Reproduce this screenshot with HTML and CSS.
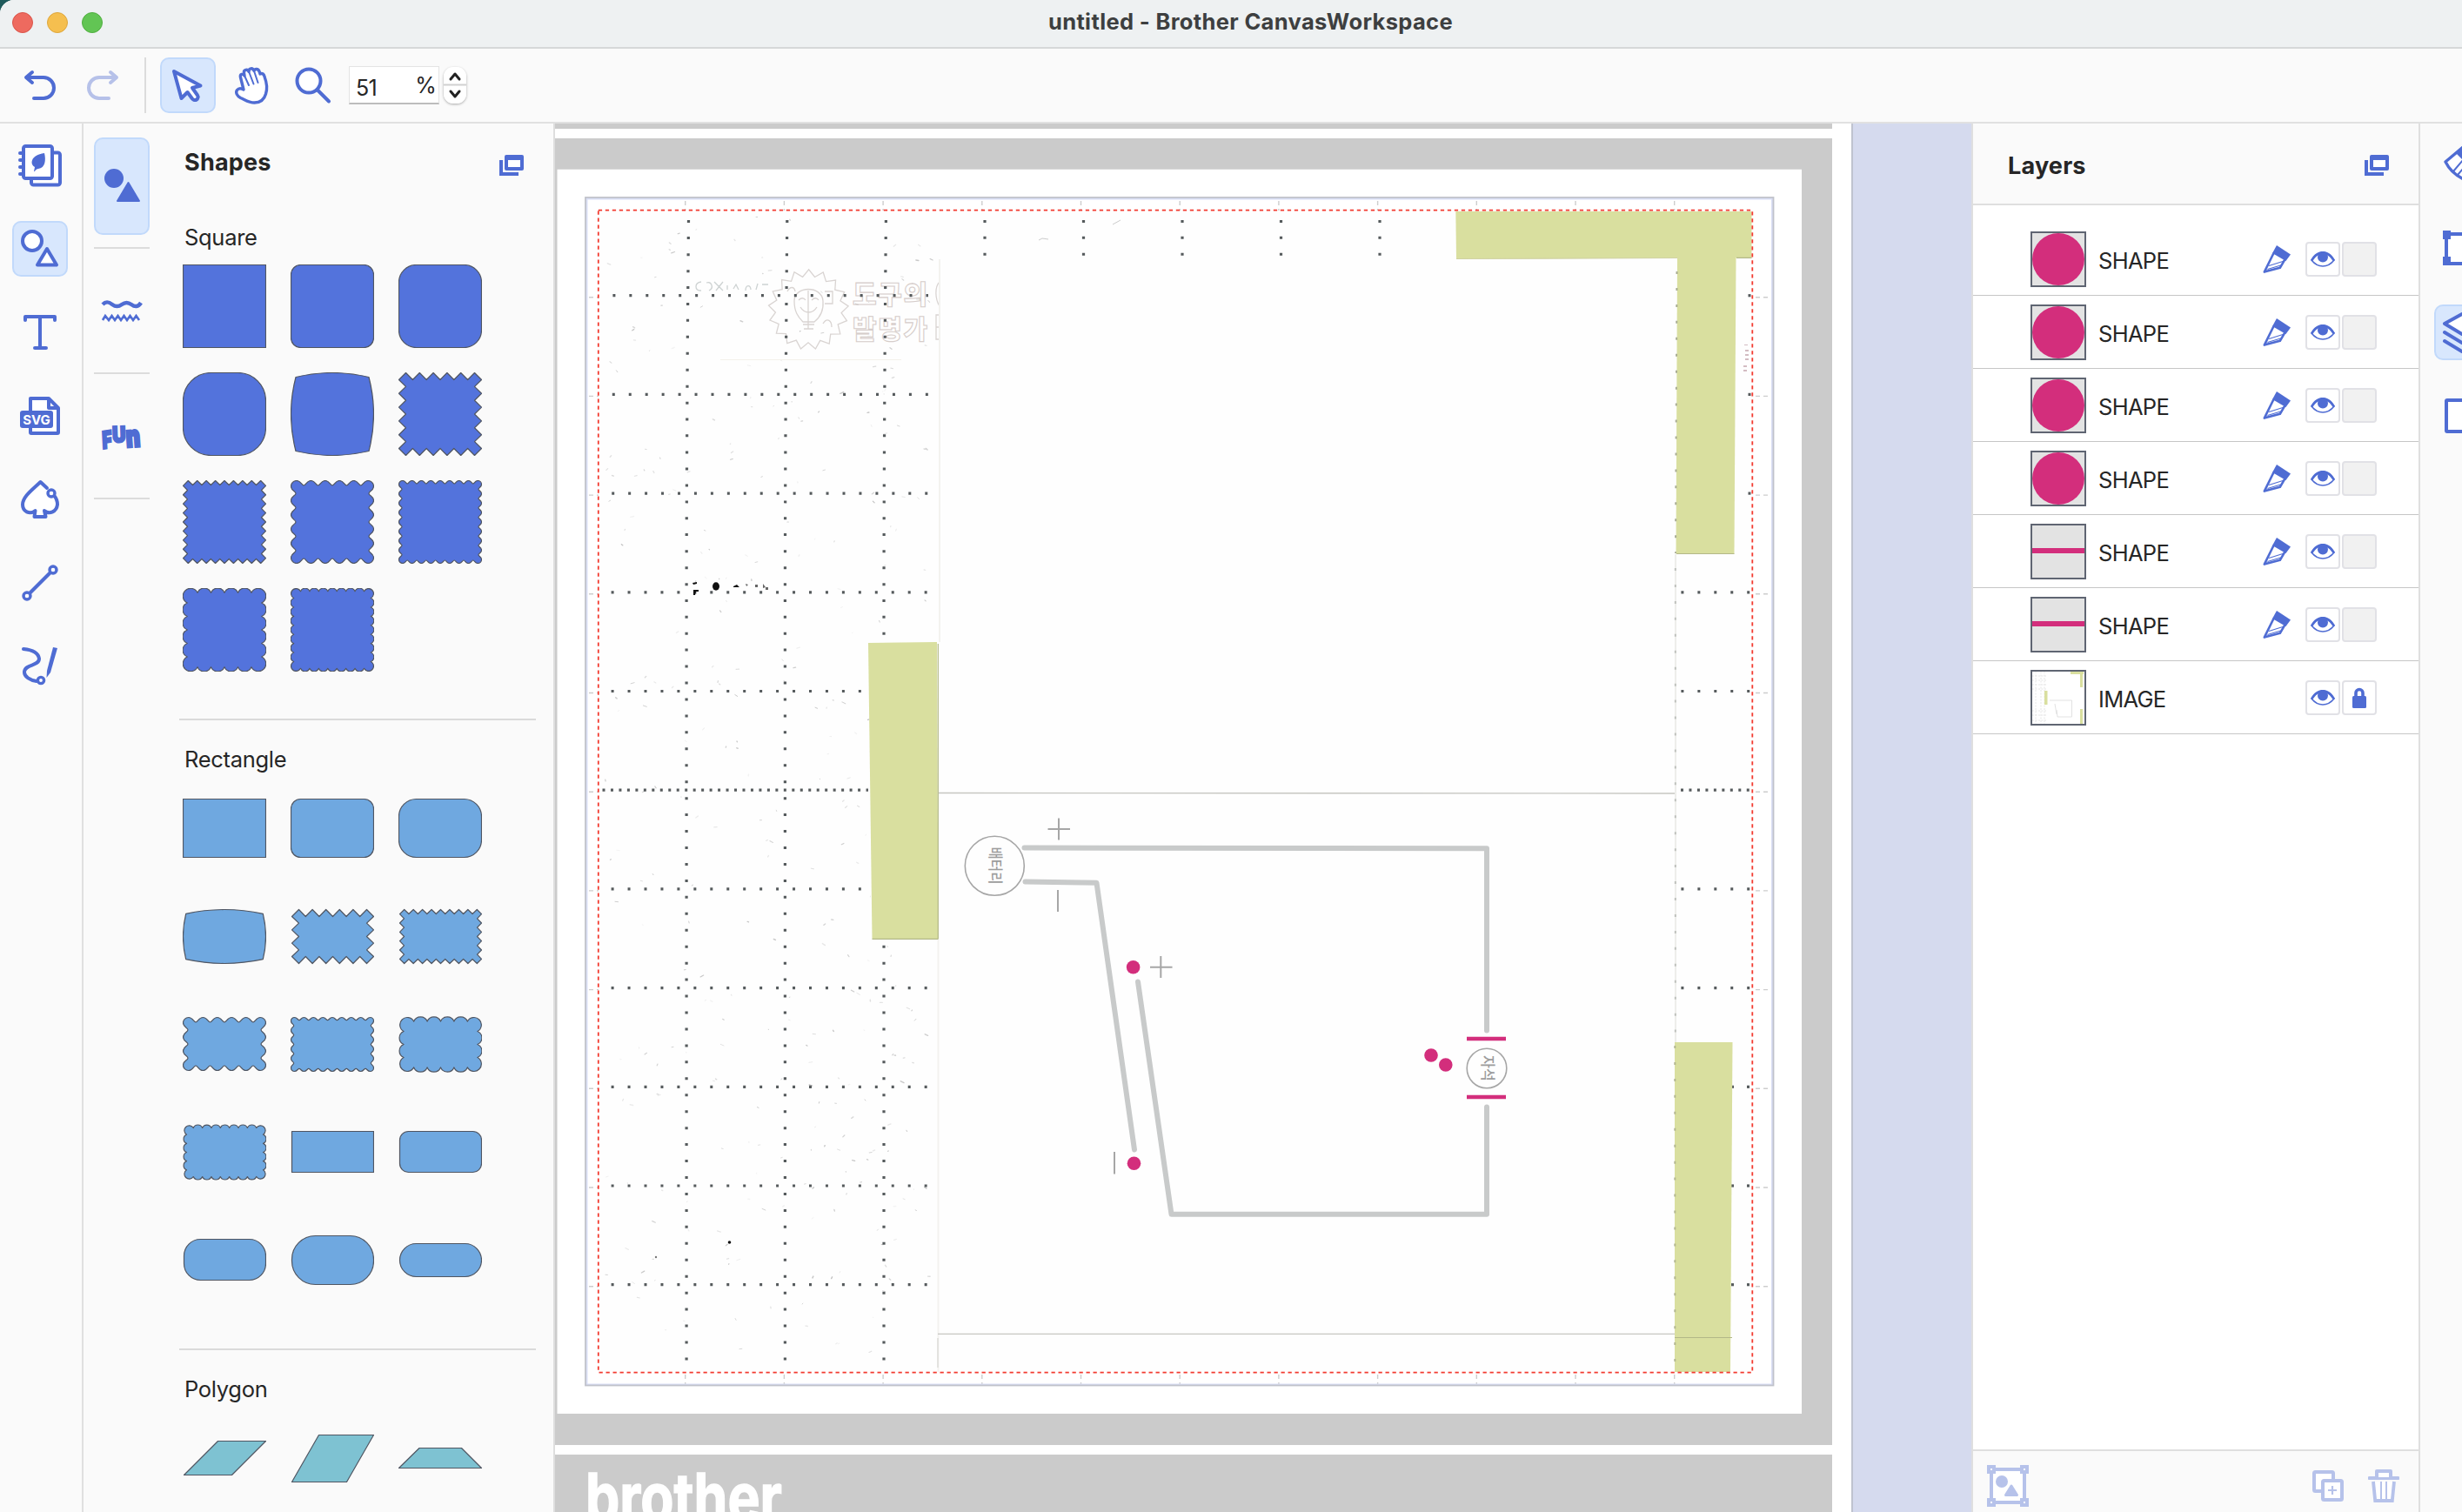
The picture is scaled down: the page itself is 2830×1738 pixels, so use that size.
FILE: index.html
```html
<!DOCTYPE html>
<html lang="en">
<head>
<meta charset="utf-8">
<title>untitled - Brother CanvasWorkspace</title>
<link rel="stylesheet" href="styles.css">
</head>
<body>
<svg class="defs" width="0" height="0" aria-hidden="true">
  <symbol id="i-panel" viewBox="0 0 28 24"><path d="M2 6v16h20" fill="none" stroke="currentColor" stroke-width="4"/><path d="M8 2h18v14H8z" fill="#fff" stroke="currentColor" stroke-width="4" stroke-linejoin="round"/><path d="M7 1h20v5H7z" fill="currentColor"/></symbol>
  <symbol id="i-knife" viewBox="0 0 32 32"><path d="M12.500 10 2 30.500l18-5 7-11.500z" fill="#fff"/><path d="M12.500 9 1.800 30.600l18-4.800 7-12" fill="none" stroke="currentColor" stroke-width="2.600" stroke-linejoin="round"/><path d="M7 23.500l16-5M5.500 27.500l15-4.500" stroke="currentColor" stroke-width="1.100"/><path d="M16 0 32 10.500l-5.500 7.500L11 9z" fill="currentColor"/></symbol>
  <symbol id="i-eye" viewBox="0 0 28 18"><path d="M1 10C5 3.500 9 2 14 2s9 1.500 13 8c-4 5-8 7-13 7S5 15 1 10z" fill="#fff" stroke="currentColor" stroke-width="1.600"/><path d="M0 10C4 2.500 9 0 14 0s10 2.500 14 10l-2.500 1C22.500 6 19 3 14 3S5.500 6 2.500 11z" fill="currentColor"/><circle cx="14" cy="6.500" r="6" fill="currentColor"/></symbol>
  <symbol id="i-lock" viewBox="0 0 16 24"><path d="M4 12V6.500a4 4 0 0 1 8 0V12" fill="none" stroke="currentColor" stroke-width="3.600"/><rect y="10" width="16" height="14" rx="1.500" fill="currentColor"/></symbol>
</svg>

<div class="window">
  <header class="titlebar">
    <div class="lights"><i class="light red"></i><i class="light amber"></i><i class="light green"></i></div>
    <h1 class="title">untitled - Brother CanvasWorkspace</h1>
  </header>

  <div class="toolbar">
    <svg class="ico undo" width="38" height="34" viewBox="0 0 38 34"><path d="M9 2 2 8l7 6M3 8h19a12 12 0 0 1 0 24H11" /></svg>
    <svg class="ico redo" width="38" height="34" viewBox="0 0 38 34"><path d="M29 2l7 6-7 6M35 8H16a12 12 0 0 0 0 24h11" /></svg>
    <span class="rule"></span>
    <button class="tool active"><svg class="ico" width="38" height="38" viewBox="0 0 38 38"><path class="w" d="M3 3l8.500 31 7-7 5.500 7.500a3.500 3.500 0 0 0 6-4l-6-8.500 9.500-2.500z"/></svg></button>
    <button class="tool hand"><svg class="ico" width="40" height="44" viewBox="0 0 40 44"><path class="w thin" d="M11 27 7.500 13c-1-4 3-5 4.500-2l-.5-3c-.7-4 4.200-5 5.500-1.500C17 2 21.500 1.500 23 5.500c1-3 4.800-2.500 6 .5l1 3c2.500-1.500 4.500.5 5 3 3 8 3.500 14 1.500 20-2 7-7 10-13 10-7 0-11-3.500-16-5.500-4-2-6-6-4-9 2-2.500 5-2 7.500-.5z"/><path class="thin2" d="M12.500 12l4.500 10M17.500 7.500l5 13M23.500 7l4 12"/></svg></button>
    <button class="tool lens"><svg class="ico" width="42" height="42" viewBox="0 0 42 42"><ellipse class="w" cx="16" cy="16" rx="13.500" ry="13.500"/><path d="M25.500 26 39 39.500"/></svg></button>
    <div class="zoombox"><span>51</span><span class="pct">%</span></div>
    <div class="stepper"><svg width="26" height="42" viewBox="0 0 26 42"><path d="M8 14l5-6 5 6M8 28l5 6 5-6"/></svg></div>
  </div>

  <main class="body">
    <nav class="rail">
      <span class="cell"><svg class="ico" width="50" height="50" viewBox="0 0 50 50"><path class="w" d="M15 40v5a2.500 2.500 0 0 0 2.500 2.500h28A2.500 2.500 0 0 0 48 45V13a2.500 2.500 0 0 0-2.500-2.500H40"/><rect class="w" x="6" y="3" width="33" height="37" rx="2.500"/><path d="M2 11h4M2 19h4M2 27h4M2 35h4"/><path class="f" d="M30 11c2 8 1 17-7 18-3 0-4 4-5 3l1-5c-6-3-5-14 11-16z"/></svg></span>
      <span class="cell active"><svg class="ico" width="46" height="46" viewBox="0 0 46 46"><circle class="w" cx="14" cy="14" r="11"/><path class="w" d="M31 23 42 41.500H20z"/></svg></span>
      <span class="cell"><svg class="ico" width="38" height="42" viewBox="0 0 38 42"><path d="M2 7V3h34v4M19 3v36M13 39h13"/></svg></span>
      <span class="cell"><svg class="ico" width="48" height="46" viewBox="0 0 48 46"><path class="w" d="M13 3h21l11 11v28a1 1 0 0 1-1 1H14a1 1 0 0 1-1-1zM34 3v11h11"/><rect class="f" x="1" y="17" width="38" height="20" rx="3"/><text class="svgtag" x="20" y="32.500">SVG</text></svg></span>
      <span class="cell"><svg class="ico" width="46" height="46" viewBox="0 0 46 46"><path class="w" d="M31 10 23.500 3C14 12 3 20 3 29c0 8 8 12 14.500 7L16.500 43h13l-1.500-7c6 5 14 1 15-7 0-4-1-7-3.500-10"/><circle class="w s3" cx="36" cy="16" r="4"/></svg></span>
      <span class="cell"><svg class="ico" width="42" height="42" viewBox="0 0 42 42"><path d="M9 33 33 9"/><circle class="w s3" cx="6" cy="36" r="4"/><circle class="w s3" cx="36" cy="6" r="4"/></svg></span>
      <span class="cell pen"><svg class="ico" width="42" height="44" viewBox="0 0 42 44"><path d="M2 3c11 1 17 5 18 11 0 9-16 6-17 15-.5 6 7 10 14 11"/><path class="f" d="M36 1 41 2 33 30l-4.500 6 .5-8z"/><circle class="w s3" cx="22" cy="39" r="3.600"/></svg></span>
    </nav>

    <nav class="kinds">
      <div class="kind"><span class="kbox active"><svg class="ico" width="44" height="44" viewBox="0 0 44 44"><circle class="f" cx="13" cy="13" r="11"/><path class="f j" d="M29.500 18 42 39H17z"/></svg></span></div>
      <div class="kind"><span class="kbox"><svg class="ico" width="46" height="28" viewBox="0 0 46 28"><path class="butt" d="M1 6c4-4 7-3 11 0s7 3 11 0 7-3 11 0 8 3 11-2"/><path class="zig" d="M1 24l3-5 4 5 3.500-5 3.500 5 3.500-5 3.500 5 3.500-5 3.500 5 3.500-5 3.500 5 3.500-5 3.500 5"/></svg></span></div>
      <div class="kind"><span class="kbox"><svg class="fun" width="50" height="34" viewBox="0 0 50 34"><g><text transform="translate(3 31) rotate(-9) skewX(-6) scale(.95 1.350)">F</text><text transform="translate(14.500 23.500) rotate(-2) scale(1.050 1.250)">U</text><text transform="translate(30.500 29) rotate(-4) scale(1.250 1.700)">n</text></g></svg></span></div>
    </nav>

    <section class="library">
      <div class="lib-head"><h2>Shapes</h2><svg class="pop" width="28" height="24"><use href="#i-panel"/></svg></div>
      <div class="group"><h3>Square</h3><div class="grid" data-set="square"></div></div>
      <div class="group"><h3>Rectangle</h3><div class="grid" data-set="rectangle"></div></div>
      <div class="group"><h3>Polygon</h3><div class="grid" data-set="polygon"></div></div>
    </section>

    <section class="stage">
      <svg class="mat" width="1492" height="1596" viewBox="638 142 1492 1596">
        <rect x="638" y="142" width="1491" height="1596" fill="#fff"/>
        <path fill="#cbcbcb" d="M638 142h1468v6H638zM638 159h1468v1502H638zM638 1672h1468v66H638z"/>
        <rect x="640.500" y="194.700" width="1430.500" height="1430.300" fill="#fff"/>
        <rect x="2128" y="142" width="2" height="1596" fill="#bfc3cf"/>
        <text class="brand" x="673" y="1749" textLength="226" lengthAdjust="spacingAndGlyphs">brother</text>
        <g id="ticks" stroke="#cdcdcd" stroke-width="1.400" stroke-dasharray="5 4"></g>
        <rect x="674.500" y="228.500" width="1362.500" height="1363" fill="none" stroke="#d9def5" stroke-width="2"/>
        <rect x="673" y="227" width="1365.500" height="1365.500" fill="none" stroke="#c0c2cb" stroke-width="1.800"/>
        <rect x="690" y="244" width="1322" height="1332" fill="#fefefe"/>
        <g id="specks" fill="none" stroke-linecap="round"></g>

        <g class="stamp">
          <path id="sun"/>
          <path d="M913 346c0-18 32-18 33 0 1 12-5 20-10 24h-13c-6-6-10-12-10-24zM929 334v44M918 345c3-3 6-3 8 0M933 345c3-3 6-3 8 0M920 353c5 8 14 8 19 0M923 373h13M924 378h11M905 335c3-6 8-6 9 0M948 335h9v14h-9M946 372c5-8 10-3 10 4" />
          <text x="980" y="349" textLength="86">도구의</text>
          <text x="980" y="389" textLength="86">발명가</text>
          <path d="M1080 324c-6 6-5 20 0 28M1080 362h-4v28h4M1080 376h-4"/>
          <path class="scrawl" d="M806 324c-8 1-8 10 0 10M812 325c6-2 9 6 3 9M821 324l10 10M831 324l-8 10M836 333v-5M843 332l3-5 3 6M857 334c0-7 6-7 6-1M869 333l2-7M876 327h7"/>
        </g>
        <path d="M828 413.500H1036" stroke="#f3f1ea"/>

        <g id="dots" fill="none" stroke="#555a5c" stroke-width="3.200"></g>
        <g fill="#111"><ellipse cx="823" cy="674" rx="4" ry="4.700"/><path d="M796 670l5-1v2l-4 1zM797 678h6v2h-3l-1 4h-2zM843 674l4-2 3 3h-7z"/><path fill="#666" d="M857 671l3 1-2 2zM868 672h3v3h-3zM877 671l3 4-3 1zM880 675h3v3h-3z"/><circle cx="838.500" cy="1428" r="1.800"/><circle cx="754" cy="1445" r="1.200" fill="#777"/></g>
        <g stroke="#ccc" fill="none"><path d="M1279 258l9-5M1194 276l4-2 7 1" /><path stroke="#f3f2ef" stroke-width="2" d="M1080 298V738M1078.500 1080V1577"/><path stroke="#dcdcd8" stroke-width="1.500" d="M1078 1572v-34"/><path stroke="#e8e8e4" stroke-width="1.500" d="M1926 637V1198"/></g>
        <path d="M1079 911.500 1925 912M1078 1533.300H1925" stroke="#c6c6c1" stroke-width="1.300"/>

        <g fill="#d9df9f">
          <path d="M998 739 1077 738 1078.500 1079.500 1002.500 1079z"/>
          <path d="M1673.300 243H2013.500V296.300L1674 297.500z"/>
          <path d="M1928 296H1995.500L1993.500 636.500H1926.500z"/>
          <path d="M1925 1198H1991.500L1989 1577H1925z"/>
        </g>
        <path d="M1002.500 1079.300H1078.500M1996 296.300H2013.500M1927 636.500H1993.500M1925 1537.500H1991M1078.300 740V1079" fill="none" stroke="#b3b888" stroke-width="1.200"/>
        <path d="M1674 297.500 1928 296.500" stroke="#d0d2a4" stroke-width="1.200"/>
        <g id="edge" fill="none"></g>
        <path d="M2007 396v1M2008 402v12M2006 420v10" stroke="#d3bcc2" stroke-width="4" stroke-dasharray="2 3"/>

        <g class="wire">
          <path d="M1177.500 974.500 1709 975.300V1184.500"/>
          <path d="M1178.500 1013.500 1260.500 1014.800 1304 1321.500"/>
          <path d="M1308 1128.500 1346.500 1395.700H1709V1272.500"/>
        </g>
        <g fill="none" stroke="#a6a6a6" stroke-width="1.600"><circle cx="1143.300" cy="995.300" r="34"/><circle cx="1709" cy="1228" r="22.800"/><path stroke-width="2" d="M1204.500 953h25.500M1217 940.500v25M1216 1023v25M1322 1111.700h25.500M1334.300 1099v25M1281 1324v25.500"/></g>
        <text class="label" transform="translate(1138 973.500) rotate(90)" textLength="43" lengthAdjust="spacingAndGlyphs">배터리</text>
        <text class="label" transform="translate(1703.500 1213) rotate(90)" textLength="30" lengthAdjust="spacingAndGlyphs">자석</text>
        <g fill="#d32e7c"><circle cx="1302.600" cy="1111.700" r="7.800"/><circle cx="1303.500" cy="1337.300" r="7.800"/><circle cx="1645" cy="1213" r="7.800"/><circle cx="1661.800" cy="1224" r="7.800"/><path d="M1686 1191.700h45v4.500h-45zM1686 1258.700h45v4.500h-45z"/></g>
        <rect x="687.800" y="241.700" width="1326.500" height="1336" fill="none" stroke="#f23b30" stroke-width="1.800" stroke-dasharray="4.300 3.700"/>
      </svg>
    </section>

    <aside class="layers">
      <div class="lay-head"><h2>Layers</h2><svg class="pop" width="28" height="24"><use href="#i-panel"/></svg></div>
      <ul class="list" id="layers"></ul>
      <div class="lay-foot">
        <svg width="48" height="48" viewBox="0 0 48 48"><path d="M5 5h38v38H5z" fill="#fff" stroke="currentColor" stroke-width="4"/><path d="M2 2h6v6H2zM40 2h6v6h-6zM2 40h6v6H2zM40 40h6v6h-6z" fill="#fff" stroke="currentColor" stroke-width="4"/><circle cx="17" cy="19" r="7" fill="currentColor"/><path d="M28 24l6.500 10.500h-13z" fill="currentColor" stroke="currentColor" stroke-width="3" stroke-linejoin="round"/></svg>
        <svg class="dup" width="36" height="36" viewBox="0 0 36 36"><rect x="2" y="2" width="22" height="22" rx="1.500" fill="#fff" stroke="currentColor" stroke-width="4"/><rect x="12" y="12" width="22" height="22" rx="1.500" fill="#fff" stroke="currentColor" stroke-width="4"/><path d="M18 23h10M23 18v10" stroke="currentColor" stroke-width="2.200"/></svg>
        <svg width="36" height="38" viewBox="0 0 36 38"><path d="M1.500 10h33" stroke="currentColor" stroke-width="4" stroke-linecap="round"/><path d="M10 9V2h16v7" fill="#fff" stroke="currentColor" stroke-width="4" stroke-linejoin="round"/><path d="M6 14l2.200 22h19.600L30 14" fill="#fff" stroke="currentColor" stroke-width="3.800"/><path d="M15 14v21M21 14v21" stroke="currentColor" stroke-width="2"/></svg>
      </div>
    </aside>

    <nav class="props">
      <span class="cell"><svg class="ico" width="44" height="44" viewBox="0 0 44 44"><path class="w s3" d="M22 2 3 18c5 10 12 17 26 22z"/><path class="f" d="M22 0 15 8l9 9z"/><path class="thin2" d="M12 29l12-14M17 33l12-14"/></svg></span>
      <span class="cell"><svg class="ico" width="44" height="42" viewBox="0 0 44 42"><path class="w" d="M4 4h36v34H4z"/><path class="f" d="M0 0h9v10H0zM0 30h9v10H0zM35 0h9v10h-9zM35 30h9v10h-9z"/></svg></span>
      <span class="cell active"><svg class="ico" width="44" height="48" viewBox="0 0 44 48"><path class="w" d="M22 3 2 14l20 12 20-12z"/><path d="M2 24l20 12 20-12M2 34l20 12 20-12"/></svg></span>
      <span class="cell"><svg class="ico" width="40" height="40" viewBox="0 0 40 40"><rect class="w" x="2" y="2" width="36" height="36" rx="1"/></svg></span>
    </nav>
  </main>
</div>
<script src="script.js"></script>
</body>
</html>
```

FILE: styles.css
```css
* { box-sizing: border-box; }
body { margin: 0; background: #1f5b5c; font-family: Inter, "Noto Sans CJK KR", sans-serif; color: #262626; }
h1, h2, h3, ul { margin: 0; padding: 0; font-weight: 400; list-style: none; }
button { padding: 0; background: none; border: 2px solid transparent; }
svg { display: block; flex: none; }
.defs { position: absolute; }

.window { width: 2830px; height: 1738px; overflow: hidden; background: #fafafa; border-top-left-radius: 16px; display: flex; flex-direction: column; }

.titlebar { height: 56px; flex: none; background: #eef1f2; border-bottom: 2px solid #d6d8d9; display: grid; grid-template-columns: 14px 1fr; align-items: center; padding-bottom: 2px; }
.lights { grid-column: 2; grid-row: 1; display: flex; gap: 16px; }
.light { width: 24px; height: 24px; border-radius: 50%; border: 1px solid; }
.red { background: #ee6a5f; border-color: #d9544a; }
.amber { background: #f5bf4f; border-color: #dda63c; }
.green { background: #62c554; border-color: #50ae40; }
.title { grid-column: 1 / 3; grid-row: 1; text-align: center; padding: 0 0 3px 45px; font-size: 25.500px; font-weight: 700; letter-spacing: .35px; color: #3d3f40; }

.toolbar { height: 86px; flex: none; border-bottom: 2px solid #e1e1e1; display: flex; align-items: center; padding-left: 28px; }
.ico { color: #4f6cd3; fill: none; stroke: #4f6cd3; stroke-width: 4; stroke-linecap: round; stroke-linejoin: round; overflow: visible; }
.ico .w { fill: #fff; }
.ico .f { fill: #4f6cd3; stroke: none; }
.ico .j { stroke: #4f6cd3; stroke-width: 2; }
.ico .s3 { stroke-width: 3.4; }
.ico .thin { stroke-width: 3.4; }
.ico .thin2 { stroke-width: 2; }
.ico .butt { stroke-linecap: butt; stroke-width: 4.5; }
.ico .zig { stroke-linecap: butt; stroke-width: 2.6; stroke-linejoin: miter; }
.redo { margin-left: 32px; stroke: #b6c1e9; }
.rule { width: 2px; height: 64px; background: #dcdcdc; margin: 0 16px 0 30px; }
.tool { width: 64px; height: 64px; border-radius: 10px; display: grid; place-items: center; }
.active { background: #d8e7fd; border: 2px solid #c1d9fb; border-radius: 10px; }
.hand { margin-left: 9px; }
.lens { margin-left: 7px; }
.zoombox { width: 104px; height: 44px; margin-left: 9px; background: #fff; border: 1px solid #e4e4e4; border-bottom: 2px solid #bcbcbc; display: flex; justify-content: space-between; padding: 4px 3px 0 7px; line-height: 40px; font-size: 25px; letter-spacing: -.8px; }
.pct { margin-top: -3px; font-size: 25px; }
.stepper { margin-left: 5px; width: 26px; height: 42px; border-radius: 11px; background: linear-gradient(#fff 19px, #d0d0d0 20px, #d0d0d0 21px, #fff 22px); box-shadow: 0 1px 3px #0005; }
.stepper path { fill: none; stroke: #222; stroke-width: 3; stroke-linecap: round; stroke-linejoin: round; }

.body { flex: 1; min-height: 0; display: flex; }
.rail { width: 96px; border-right: 2px solid #e0e0e0; padding: 16px 0 0 14px; display: flex; flex-direction: column; gap: 32px; }
.cell { width: 64px; height: 64px; flex: none; display: grid; place-items: center; }
.pen { padding-bottom: 3px; }
.svgtag { fill: #fff; stroke: none; font: 700 15px Inter, sans-serif; text-anchor: middle; }

.kinds { width: 88px; padding-left: 12px; }
.kind { width: 64px; height: 144px; padding: 16px 0 14px; border-bottom: 2px solid #dcdcdc; }
.kbox { height: 112px; display: grid; place-items: center; }
.fun { overflow: visible; fill: #4f6cd3; stroke: #4f6cd3; stroke-width: 1.8; }
.fun text { font: 900 20px Inter, sans-serif; }

.library { width: 454px; border-right: 2px solid #dedede; padding: 0 20px 0 22px; }
.lib-head { height: 86px; padding: 3px 14px 0 6px; display: flex; align-items: center; justify-content: space-between; }
h2 { font-size: 27px; font-weight: 700; letter-spacing: .2px; }
.pop { color: #4f6cd3; margin-top: 7px; }
.group { padding-bottom: 54px; border-bottom: 2px solid #dadada; }
.group h3 { height: 76px; padding: 29px 0 0 6px; line-height: 32px; font-size: 25.500px; letter-spacing: -.3px; }
.grid { display: grid; grid-template-columns: repeat(3, 96px); grid-auto-rows: 96px; gap: 28px; padding-left: 4px; }
.grid path { stroke: #505662; stroke-width: 1.2; stroke-linejoin: round; }

.stage { width: 1628px; flex: none; background: #d5daee; }
.brand { font: 700 77px Inter, sans-serif; fill: #fff; stroke: #fff; stroke-width: 1.5; }
.stamp { fill: none; stroke: #d9d4d2; stroke-width: 1.3; }
.stamp text { font: 900 30px "Noto Sans CJK KR", sans-serif; stroke: #d6cdca; stroke-width: 1.1; }
.scrawl { stroke: #cdd2d2; }
.wire { fill: none; stroke: #c8caca; stroke-width: 6; stroke-linecap: round; stroke-linejoin: round; }
.label { font: 500 17px "Noto Sans CJK KR", sans-serif; fill: #9c9c9c; }

.layers { width: 516px; flex: none; border: solid #dfdfdf; border-width: 0 2px; display: flex; flex-direction: column; }
.lay-head { height: 94px; flex: none; border-bottom: 2px solid #dfdfdf; padding: 4px 34px 0 40px; display: flex; align-items: center; justify-content: space-between; }
.lay-head .pop { margin-top: 0; }
.list { flex: 1; background: #fff; padding-top: 20px; }
.row { height: 84px; border-bottom: 1px solid #c6c6c6; display: flex; align-items: center; padding: 0 48px 0 66px; }
.thumb { width: 64px; height: 64px; border: 2px solid #5f6572; background: #e3e3e3; }
.name { flex: 1; padding: 4px 0 0 14px; font-size: 25.500px; letter-spacing: -.7px; }
.row .knife { color: #4f6cd3; margin-right: 17px; }
.box { width: 40px; height: 40px; border: 2px solid #e1e1e6; border-radius: 4px; display: grid; place-items: center; background: #fff; color: #4f6cd3; }
.box + .box { margin-left: 2px; }
.off { background: #f1f1f1; }
.lay-foot { height: 72px; flex: none; border-top: 2px solid #dfdfdf; display: flex; align-items: center; padding: 9px 22px 0 16px; color: #b6c2ea; }
.lay-foot .dup { margin: 0 28px 0 auto; }

.props { width: 48px; flex: none; padding: 16px 0 0 16px; display: flex; flex-direction: column; gap: 32px; overflow: hidden; }
```

FILE: script.js
```js
const f = n => +n.toFixed(2);

// Outline of a w x h frame whose sides carry nx / ny teeth.
// kind: "zig" straight teeth, "wave" soft bumps, "arc" round scallops.
function frame(kind, w, h, nx, ny, s, d) {
  const sides = [[w, nx], [h, ny], [w, nx], [h, ny]];
  const at = (side, t, v) => [[t, v], [w - v, t], [w - t, h - v], [v, h - t]][side].map(f).join(' ');
  let p = '';
  sides.forEach(([len, n], k) => {
    const pitch = (len - 2 * s) / (n - 1);
    for (let i = 0; i < n; i++) {
      const x = s + i * pitch;
      if (kind === 'arc') {
        if (i === 0) p += (k === 0 ? 'M' : `A${s} ${s} 0 1 1 `) + at(k, x + pitch / 2, d);
        else if (i < n - 1) { const r = f(pitch / 1.85); p += `A${r} ${r} 0 0 1 ` + at(k, x + pitch / 2, d); }
      } else if (i === 0) {
        p += k === 0 ? 'M' + at(k, x, 0) : (kind === 'zig' ? 'L' : `A${s} ${s} 0 0 1 `) + at(k, x, 0);
      } else {
        const m = x - pitch / 2, q = pitch * .3;
        p += kind === 'zig'
          ? 'L' + at(k, m, d) + 'L' + at(k, x, 0)
          : 'C' + at(k, x - pitch + q, 0) + ' ' + at(k, m - q / 2, d) + ' ' + at(k, m, d) + 'C' + at(k, m + q / 2, d) + ' ' + at(k, x - q, 0) + ' ' + at(k, x, 0);
      }
    }
  });
  if (kind === 'arc') p += `A${s} ${s} 0 1 1 ` + at(0, s + (w - 2 * s) / (nx - 1) / 2, d);
  else if (kind === 'wave') p += `A${s} ${s} 0 0 1 ` + at(0, s, 0);
  return p + 'Z';
}
const round = (w, h, r) => `M${r} 0H${w - r}A${r} ${r} 0 0 1 ${w} ${r}V${h - r}A${r} ${r} 0 0 1 ${w - r} ${h}H${r}A${r} ${r} 0 0 1 0 ${h - r}V${r}A${r} ${r} 0 0 1 ${r} 0Z`;
const barrel = (w, h, a, b) => `M${a} ${b}Q${w / 2} ${-b} ${w - a} ${b}Q${w + a} ${h / 2} ${w - a} ${h - b}Q${w / 2} ${h + b} ${a} ${h - b}Q${-a} ${h / 2} ${a} ${b}Z`;

const sets = {
  square: ['#5373dc', [
    [95, 95, round(95, 95, 0)], [95, 95, round(95, 95, 11)], [95, 95, round(95, 95, 20)],
    [95, 95, round(95, 95, 32)], [95, 95, barrel(95, 95, 5.5, 5)], [95, 95, frame('zig', 95, 95, 6, 6, 8, 8)],
    [95, 95, frame('zig', 95, 95, 9, 9, 5.8, 5)], [95, 95, frame('wave', 95, 95, 6, 6, 6.5, 5.5)], [95, 95, frame('wave', 95, 95, 9, 9, 4.3, 3.5)],
    [95, 95, frame('arc', 95, 95, 6, 6, 8.8, 4.8)], [95, 95, frame('arc', 95, 95, 9, 9, 5.8, 3.2)]]],
  rectangle: ['#6fa8e0', [
    [95, 67, round(95, 67, 0)], [95, 67, round(95, 67, 11)], [95, 67, round(95, 67, 20)],
    [95, 62, barrel(95, 62, 3.2, 4.8)], [94, 62, frame('zig', 94, 62, 6, 4, 8, 8)], [94, 62, frame('zig', 94, 62, 9, 6, 5.2, 5)],
    [95, 61, frame('wave', 95, 61, 6, 4, 6.3, 5.5)], [95, 62, frame('wave', 95, 62, 9, 6, 4, 3.2)], [94, 62, frame('arc', 94, 62, 6, 4, 8.5, 4.6)],
    [94, 62, frame('arc', 94, 62, 9, 6, 5.6, 3)], [94, 47, round(94, 47, 0)], [94, 47, round(94, 47, 10)],
    [94, 47, round(94, 47, 19)], [94, 56, round(94, 56, 27)], [94, 38, round(94, 38, 19)]]],
  polygon: ['#7ec2d2', [
    [94, 39, 'M39 0H94L55 39H0Z'], [94, 54, 'M31 0H94L63 54H0Z'], [95, 23, 'M23.500 0H72L95 23H0Z']]]
};
for (const [name, [fill, shapes]] of Object.entries(sets)) {
  document.querySelector(`[data-set=${name}]`).innerHTML = shapes.map(([w, h, d]) =>
    `<svg width="96" height="96" viewBox="0 0 96 96"><path fill="${fill}" transform="translate(${Math.floor((96 - w) / 2) + .5} ${Math.floor((96 - h) / 2) + .5})" d="${d}"/></svg>`).join('');
}

// Layer rows
const mini = '<svg width="60" height="60" viewBox="0 0 60 60"><path fill="#fff" d="M0 0h60v60H0z"/><path d="M4 0v60M10 0v60M14 0v60M0 5h17M0 10h17M0 15h17M0 20h17M0 45h17M0 50h17M0 56h17" stroke="#e6e6e6" stroke-dasharray="2 1.500"/><path fill="#d9df9f" d="M44 0h15v3h-1v15h-3V3H44zM14 22h3.500v16H14zM55 43h3v17h-3z"/><path d="M20 33h25.500v19H29l-1-8M26 37l2 12" fill="none" stroke="#e2e2e2"/></svg>';
const disc = '<svg width="60" height="60"><circle cx="30" cy="30" r="30" fill="#d32e7c"/></svg>';
const bar = '<svg width="60" height="60"><path d="M0 26h60v6H0z" fill="#d32e7c"/></svg>';
document.getElementById('layers').innerHTML = [disc, disc, disc, disc, bar, bar, mini].map((art, i) => {
  const locked = i === 6;
  return `<li class="row"><span class="thumb">${art}</span><span class="name">${locked ? 'IMAGE' : 'SHAPE'}</span>` +
    (locked ? '' : '<svg class="knife" width="32" height="32"><use href="#i-knife"/></svg>') +
    '<span class="box"><svg width="28" height="18"><use href="#i-eye"/></svg></span>' +
    (locked ? '<span class="box"><svg width="16" height="24"><use href="#i-lock"/></svg></span>' : '<span class="box off"></span>') + '</li>';
}).join('');

// Mat ticks
let ticks = '';
for (let i = 1; i < 12; i++) {
  const x = f(674 + i * 113.7), y = f(228 + i * 113.7);
  ticks += `<path d="M${x} 231V242M${x} 1580V1591M677 ${y}H688M2018 ${y}H2037"/>`;
}
document.getElementById('ticks').innerHTML = ticks;

// Dotted rulings of the scanned sheet
let dots = '', edge = '';
const P = 18.947, dash = `stroke-dasharray="3 ${f(P - 3)}"`;
[790.3, 903.6, 1017.2].forEach(x => {
  const a = f(x + 1.2), b = f(x - 1.2);
  dots += `<path ${dash} d="M${a} 252.900Q${b} 500 ${b} 720V1566"/>`;
});
[1132, 1245.5, 1359, 1472.5, 1586].forEach(x => dots += `<path ${dash} d="M${x} 252.900V296"/>`);
for (let k = 0; k < 11; k++) {
  const y = f(339.7 + k * 113.7), x = 704.4 - Math.min(k, 3) * .6;
  if (k === 5) { dots += `<path stroke-dasharray="3 6.470" d="M692.500 ${y}H998M1932 ${y}H2012"/>`; continue; }
  dots += `<path ${dash} d="M${f(x)} ${y}H1067"/>`;
  dots += k > 2 && k < 8 ? `<path ${dash} d="M1932.400 ${y}H2012"/>` : `<path d="M${k < 3 ? 2009.5 : 2008} ${y}h3"/>`;
  if (k > 7) dots += `<path d="M1990 ${y}h3"/>`;
}
edge += `<path ${dash} stroke="#a9ad93" stroke-width="2" d="M1927.500 312L1926 636"/>`;
edge += `<path ${dash} stroke="#bfc1bd" stroke-width="2" d="M1925.800 653V1198"/>`;
edge += `<path ${dash} stroke="#b3b790" stroke-width="2" d="M1925.300 1202V1576"/>`;
document.getElementById('dots').innerHTML = dots;
document.getElementById('edge').innerHTML = edge;

// Zigzag sun emblem
let sun = '';
for (let i = 0; i <= 34; i++) {
  const a = i * Math.PI / 17 + .1, r = i % 2 ? 46 : 38;
  sun += (i ? 'L' : 'M') + f(929.3 + r * Math.cos(a)) + ' ' + f(355.8 + r * Math.sin(a));
}
document.getElementById('sun').setAttribute('d', sun + 'Z');

// Scanner dust, seeded so it is the same on each load
let seed = 7, dust = '';
const rnd = () => (seed = (seed * 16807) % 2147483647) / 2147483647;
for (let i = 0; i < 330; i++) {
  const x = f(696 + rnd() * 375), y = f(248 + rnd() * 1322), g = 195 + Math.floor(rnd() * 50);
  dust += `<path stroke="rgb(${g},${g},${g})" stroke-width="${f(.8 + rnd() * .7)}" d="M${x} ${y}l${f(rnd() * 6 - 2)} ${f(rnd() * 4 - 2)}"/>`;
}
document.getElementById('specks').innerHTML = dust;
```
